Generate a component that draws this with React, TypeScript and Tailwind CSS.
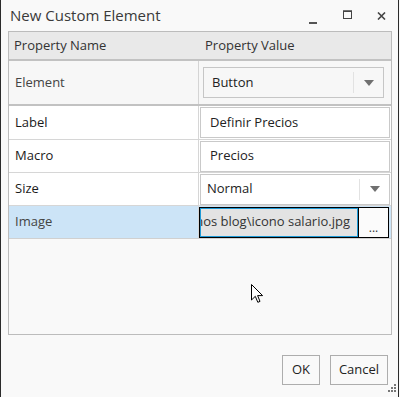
import React from 'react';

const font = { fontFamily: '"Open Sans", "Noto Sans", sans-serif' };

const ComboArrow = () => (
  <svg width="10" height="6" viewBox="0 0 10 6" className="block">
    <path d="M0 0 L10 0 L5 6 Z" fill="#707070" />
  </svg>
);

export default function App() {
  return (
    <div className="w-[400px] h-[397px] bg-[#f9f9f9]" style={font}>
      <div className="relative w-[399px] h-[397px] border-l border-r border-[#2b2b2b] flex flex-col">
        {/* Title bar */}
        <div className="h-[31px] flex items-center pl-[9px] text-[15px] text-[#3a3a3a]">
          <span>New Custom Element</span>
          <div className="ml-auto flex items-center h-full">
            <svg width="8" height="8" viewBox="0 0 8 8" className="mr-[26px] mt-[9px]">
              <rect x="0" y="6" width="8" height="2" fill="#555" />
            </svg>
            <svg width="9" height="9" viewBox="0 0 9 9" className="mr-[25px] mb-[3px]">
              <rect x="0.5" y="1" width="8" height="7.5" fill="none" stroke="#444" strokeWidth="1" />
              <rect x="0" y="0.5" width="9" height="1.5" fill="#444" />
            </svg>
            <svg width="9" height="8" viewBox="0 0 9 8" className="mr-[12px]">
              <path d="M1 0.5 L8 7.5 M8 0.5 L1 7.5" stroke="#444" strokeWidth="1.6" />
            </svg>
          </div>
        </div>

        {/* Property grid */}
        <div className="ml-[7px] w-[384px] h-[304px] border border-[#bcbcbc] flex flex-col text-[13px]">
          <div className="h-[29px] shrink-0 bg-[#e9e9e9] border-b-2 border-[#c2c2c2] flex items-center text-[#333]">
            <div className="w-[191px] pl-[5px]">Property Name</div>
            <div className="pl-[5px]">Property Value</div>
          </div>

          {/* Element */}
          <div className="h-[45px] shrink-0 bg-[#f7f7f7] border-b-2 border-[#c2c2c2] flex">
            <div className="w-[190px] border-r border-[#d4d4d4] flex items-center pl-[6px] text-[#444]">Element</div>
            <div className="flex-1 flex items-center pl-[4px]">
              <div className="w-[181px] h-[31px] border border-[#c6c6c6] flex items-center">
                <span className="pl-[8px] text-[#222]">Button</span>
                <div className="ml-auto h-[21px] border-l border-[#e2e2e2]" />
                <div className="w-[29px] flex justify-center"><ComboArrow /></div>
              </div>
            </div>
          </div>

          {/* Label */}
          <div className="h-[34px] shrink-0 bg-white border-b border-[#d6d6d6] flex">
            <div className="w-[190px] border-r border-[#d6d6d6] flex items-center pl-[6px] text-[#1a1a1a]">Label</div>
            <div className="flex-1 flex items-center pl-[1px] pr-[1px]">
              <div className="w-full h-[31px] border border-[#c9c9c9] flex items-center pl-[9px] text-[#222]">Definir Precios</div>
            </div>
          </div>

          {/* Macro */}
          <div className="h-[33px] shrink-0 bg-white border-b border-[#d6d6d6] flex">
            <div className="w-[190px] border-r border-[#d6d6d6] flex items-center pl-[6px] text-[#1a1a1a]">Macro</div>
            <div className="flex-1 flex items-center pl-[1px] pr-[1px]">
              <div className="w-full h-[31px] border border-[#c9c9c9] flex items-center pl-[9px] text-[#222]">Precios</div>
            </div>
          </div>

          {/* Size */}
          <div className="h-[33px] shrink-0 bg-white border-b border-[#d6d6d6] flex">
            <div className="w-[190px] border-r border-[#d6d6d6] flex items-center pl-[6px] text-[#1a1a1a]">Size</div>
            <div className="flex-1 flex items-center pl-[1px] pr-[1px]">
              <div className="w-full h-[31px] border border-[#c9c9c9] flex items-center">
                <span className="pl-[6px] text-[#222]">Normal</span>
                <div className="ml-auto h-[21px] border-l border-[#e2e2e2]" />
                <div className="w-[29px] flex justify-center"><ComboArrow /></div>
              </div>
            </div>
          </div>

          {/* Image */}
          <div className="h-[33px] shrink-0 border-b border-[#d0d0d0] flex">
            <div className="w-[190px] bg-[#cce4f7] border-r border-[#d6d6d6] flex items-center pl-[6px] text-[#444]">Image</div>
            <div className="flex-1 flex items-center bg-[#cce4f7]">
              <div className="w-[190px] h-[31px] border border-black flex">
                <div className="flex-1 min-w-0 overflow-hidden border border-[#1e9ad6] bg-[#e3e3e3] flex justify-end items-center pr-[7px] text-[#333] whitespace-nowrap">
                  <span>Iconos blog\icono salario.jpg</span>
                </div>
                <div className="w-[30px] border-l border-black bg-[#fbfbfb] flex justify-center items-end pb-[3px] text-[12px] text-[#333] leading-none">...</div>
              </div>
            </div>
          </div>

          <div className="flex-1 bg-[#f9f9f9]" />
        </div>

        {/* Buttons */}
        <div className="mt-[20px] flex justify-end gap-[10px] pr-[10px] text-[13px] text-[#222]">
          <button className="w-[38px] h-[30px] border border-[#adadad] bg-[#f9f9f9]">OK</button>
          <button className="w-[58px] h-[30px] border border-[#adadad] bg-[#f9f9f9]">Cancel</button>
        </div>

        {/* Resize grip */}
        <svg width="12" height="12" viewBox="0 0 12 12" className="absolute right-[0px] bottom-[1px]">
          <rect x="8" y="0" width="2" height="2" fill="#777" />
          <rect x="5" y="3" width="2" height="2" fill="#777" />
          <rect x="8" y="3" width="2" height="2" fill="#777" />
          <rect x="2" y="6" width="2" height="2" fill="#777" />
          <rect x="5" y="6" width="2" height="2" fill="#777" />
          <rect x="8" y="6" width="2" height="2" fill="#777" />
        </svg>

        {/* Mouse cursor */}
        <svg width="13" height="20" viewBox="0 0 13 20" className="absolute left-[250px] top-[284px]">
          <path d="M0.5 0.5 L0.5 16 L4.3 12.3 L6.8 18.3 L9 17.4 L6.6 11.6 L11.6 11.6 Z" fill="white" stroke="black" strokeWidth="1" strokeLinejoin="miter" />
        </svg>
      </div>
    </div>
  );
}
